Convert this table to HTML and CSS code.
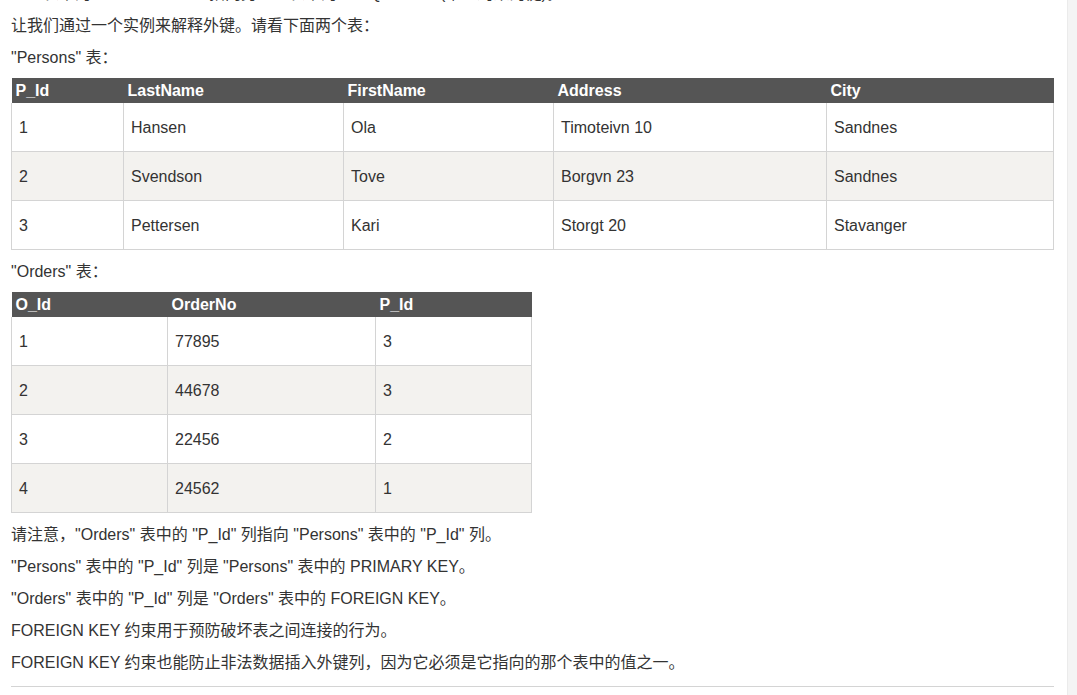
FILE: index.html
```html
<!DOCTYPE html>
<html lang="zh-CN">
<head>
<meta charset="utf-8">
<title>SQL FOREIGN KEY</title>
<link rel="stylesheet" href="styles.css">
</head>
<body>
<div class="layout">
  <main class="article">
    <div class="scrolled">
      <p>一个表中的 FOREIGN KEY 指向另一个表中的 UNIQUE KEY(唯一约束的键)。</p>
      <p>让我们通过一个实例来解释外键。请看下面两个表：</p>
      <p>"Persons" 表：</p>
      <table class="data persons">
        <colgroup>
          <col class="c112"><col class="c220"><col class="c210"><col class="c273"><col>
        </colgroup>
        <thead>
          <tr><th>P_Id</th><th>LastName</th><th>FirstName</th><th>Address</th><th>City</th></tr>
        </thead>
        <tbody>
          <tr><td>1</td><td>Hansen</td><td>Ola</td><td>Timoteivn 10</td><td>Sandnes</td></tr>
          <tr><td>2</td><td>Svendson</td><td>Tove</td><td>Borgvn 23</td><td>Sandnes</td></tr>
          <tr><td>3</td><td>Pettersen</td><td>Kari</td><td>Storgt 20</td><td>Stavanger</td></tr>
        </tbody>
      </table>
      <p>"Orders" 表：</p>
      <table class="data orders">
        <colgroup>
          <col class="c156"><col class="c208"><col>
        </colgroup>
        <thead>
          <tr><th>O_Id</th><th>OrderNo</th><th>P_Id</th></tr>
        </thead>
        <tbody>
          <tr><td>1</td><td>77895</td><td>3</td></tr>
          <tr><td>2</td><td>44678</td><td>3</td></tr>
          <tr><td>3</td><td>22456</td><td>2</td></tr>
          <tr><td>4</td><td>24562</td><td>1</td></tr>
        </tbody>
      </table>
      <p>请注意，"Orders" 表中的 "P_Id" 列指向 "Persons" 表中的 "P_Id" 列。</p>
      <p>"Persons" 表中的 "P_Id" 列是 "Persons" 表中的 PRIMARY KEY。</p>
      <p>"Orders" 表中的 "P_Id" 列是 "Orders" 表中的 FOREIGN KEY。</p>
      <p>FOREIGN KEY 约束用于预防破坏表之间连接的行为。</p>
      <p>FOREIGN KEY 约束也能防止非法数据插入外键列，因为它必须是它指向的那个表中的值之一。</p>
      <hr class="rule">
    </div>
  </main>
  <aside class="sidebar"></aside>
</div>
</body>
</html>
```

FILE: styles.css
```css
html, body {
  margin: 0;
  padding: 0;
  background: #fff;
}
body {
  font-family: "Liberation Sans", Arial, "Noto Sans CJK SC", sans-serif;
  font-size: 16px;
  color: #333;
  overflow: hidden;
}
.layout {
  display: flex;
  height: 695px;
  overflow: hidden;
}
.article {
  flex: 1;
  padding: 0 13px 0 11px;
  overflow: hidden;
}
.scrolled {
  margin-top: -22px;
}
.sidebar {
  width: 9px;
  flex: none;
  background: #f4f4f4;
  border-left: 1px solid #ebebeb;
}
p {
  margin: 0;
  line-height: 32px;
}
.data {
  border-collapse: collapse;
  table-layout: fixed;
  margin: 4px 0 6px;
  border: none;
}
.persons { width: 1043px; }
.orders { width: 521px; }
.c112 { width: 112px; }
.c220 { width: 220px; }
.c210 { width: 210px; }
.c273 { width: 273px; }
.c156 { width: 156px; }
.c208 { width: 208px; }
.data th {
  background: #555;
  color: #fff;
  font-weight: bold;
  text-align: left;
  padding: 3px 4px;
  line-height: 19px;
  border: none;
}
.data td {
  padding: 15px 7px 13px;
  line-height: 20px;
  border: 1px solid #d4d4d4;
  vertical-align: middle;
}
.data tbody tr:first-child td {
  border-top: none;
}
.data tbody tr:nth-child(even) td {
  background: #f3f2ef;
}
.rule {
  border: 0;
  border-top: 1px solid #d4d4d4;
  margin: 7px 0 0;
  height: 0;
}
```
